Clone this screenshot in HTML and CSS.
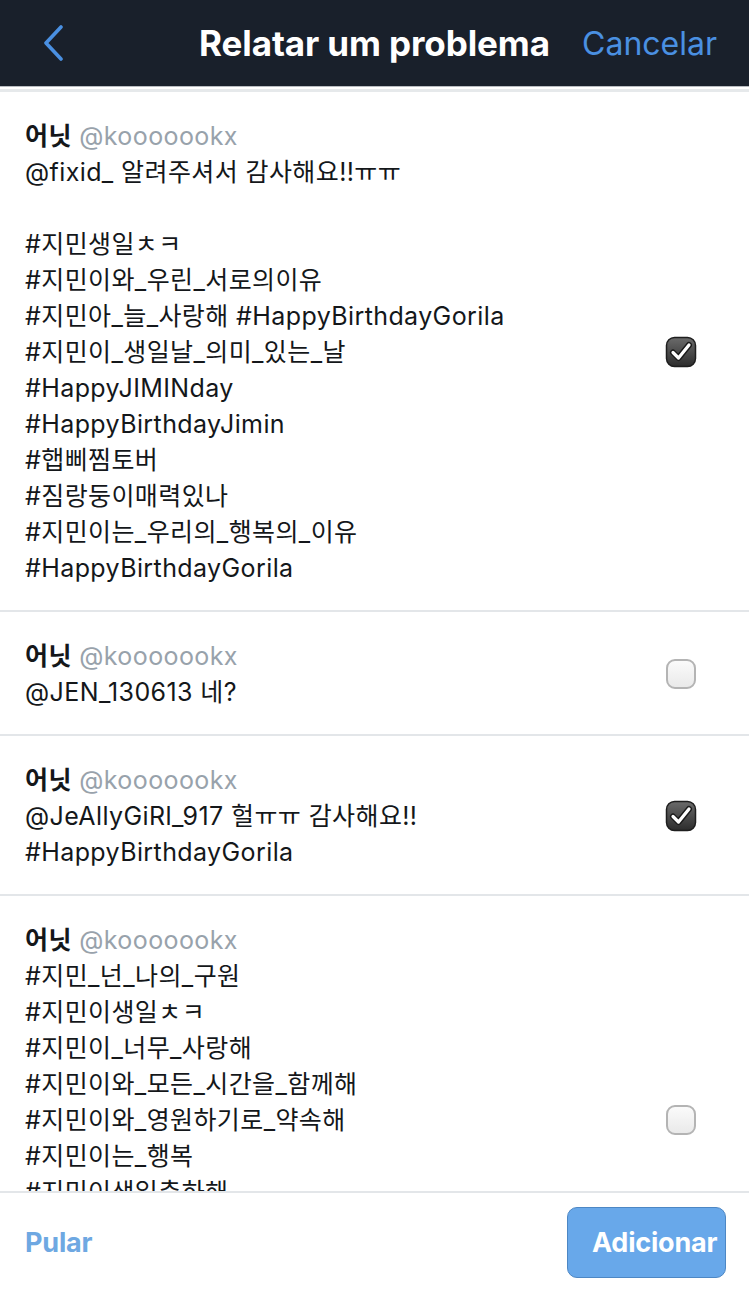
FILE: index.html
```html
<!DOCTYPE html>
<html lang="pt">
<head>
<meta charset="utf-8">
<title>Relatar um problema</title>
<link rel="stylesheet" href="styles.css">
</head>
<body>
<div class="app">
  <header class="topbar">
    <button class="back" aria-label="Voltar">
      <svg width="24" height="36" viewBox="0 0 24 36"><path d="M19 2 L4 18 L19 34" fill="none" stroke="#4a90e2" stroke-width="3.6" stroke-linecap="round" stroke-linejoin="round"/></svg>
    </button>
    <h1 class="title">Relatar um problema</h1>
    <span class="cancel">Cancelar</span>
  </header>
  <div class="list">
    <div class="tweet">
      <div class="content">
        <div class="author"><span class="name">어닛</span> <span class="handle">@kooooookx</span></div>
        <div class="body">@fixid_ 알려주셔서 감사해요!!ㅠㅠ

#지민생일ㅊㅋ
#지민이와_우린_서로의이유
#지민아_늘_사랑해 #HappyBirthdayGorila
#지민이_생일날_의미_있는_날
#HappyJIMINday
#HappyBirthdayJimin
#햅삐찜토버
#짐랑둥이매력있나
#지민이는_우리의_행복의_이유
#HappyBirthdayGorila</div>
      </div>
      <span class="check on"><svg width="32" height="32" viewBox="0 0 32 32"><defs><linearGradient id="g1" x1="0" y1="0" x2="0" y2="1"><stop offset="0" stop-color="#6b6b6b"/><stop offset="1" stop-color="#2c2c2c"/></linearGradient></defs><rect x="1.5" y="1.5" width="29" height="29" rx="8" fill="url(#g1)" stroke="#1e1e1e" stroke-width="1.5"/><path d="M8 16.5 L13.5 22 L24 9" fill="none" stroke="#1a1a1a" stroke-width="6" stroke-linecap="round" stroke-linejoin="round"/><path d="M8 16.5 L13.5 22 L24 9" fill="none" stroke="#fff" stroke-width="3.2" stroke-linecap="round" stroke-linejoin="round"/></svg></span>
    </div>
    <div class="tweet">
      <div class="content">
        <div class="author"><span class="name">어닛</span> <span class="handle">@kooooookx</span></div>
        <div class="body">@JEN_130613 네?</div>
      </div>
      <span class="check"><svg width="32" height="32" viewBox="0 0 32 32"><defs><linearGradient id="g2" x1="0" y1="0" x2="0" y2="1"><stop offset="0" stop-color="#fbfbfb"/><stop offset="1" stop-color="#e9e9e9"/></linearGradient></defs><rect x="2" y="2" width="28" height="28" rx="8" fill="url(#g2)" stroke="#b4b4b4" stroke-width="2"/></svg></span>
    </div>
    <div class="tweet">
      <div class="content">
        <div class="author"><span class="name">어닛</span> <span class="handle">@kooooookx</span></div>
        <div class="body">@JeAllyGiRl_917 헐ㅠㅠ 감사해요!!
#HappyBirthdayGorila</div>
      </div>
      <span class="check on"><svg width="32" height="32" viewBox="0 0 32 32"><defs><linearGradient id="g3" x1="0" y1="0" x2="0" y2="1"><stop offset="0" stop-color="#6b6b6b"/><stop offset="1" stop-color="#2c2c2c"/></linearGradient></defs><rect x="1.5" y="1.5" width="29" height="29" rx="8" fill="url(#g3)" stroke="#1e1e1e" stroke-width="1.5"/><path d="M8 16.5 L13.5 22 L24 9" fill="none" stroke="#1a1a1a" stroke-width="6" stroke-linecap="round" stroke-linejoin="round"/><path d="M8 16.5 L13.5 22 L24 9" fill="none" stroke="#fff" stroke-width="3.2" stroke-linecap="round" stroke-linejoin="round"/></svg></span>
    </div>
    <div class="tweet">
      <div class="content">
        <div class="author"><span class="name">어닛</span> <span class="handle">@kooooookx</span></div>
        <div class="body">#지민_넌_나의_구원
#지민이생일ㅊㅋ
#지민이_너무_사랑해
#지민이와_모든_시간을_함께해
#지민이와_영원하기로_약속해
#지민이는_행복
#지민이생일축하해
#HappyJIMINday
#HappyBirthdayJimin
#HappyBirthdayGorila</div>
      </div>
      <span class="check"><svg width="32" height="32" viewBox="0 0 32 32"><defs><linearGradient id="g4" x1="0" y1="0" x2="0" y2="1"><stop offset="0" stop-color="#fbfbfb"/><stop offset="1" stop-color="#e9e9e9"/></linearGradient></defs><rect x="2" y="2" width="28" height="28" rx="8" fill="url(#g4)" stroke="#b4b4b4" stroke-width="2"/></svg></span>
    </div>
  </div>
  <footer class="bottombar">
    <span class="skip">Pular</span>
    <button class="add">Adicionar</button>
  </footer>
</div>
</body>
</html>
```
FILE: styles.css
```css
* { box-sizing: border-box; }
html, body { margin: 0; padding: 0; background: #fff; }
body {
  font-family: Inter, "Noto Sans CJK KR", sans-serif;
  color: #14171a;
}
.app {
  width: 749px;
  height: 1292px;
  display: flex;
  flex-direction: column;
  overflow: hidden;
}
.topbar {
  flex: none;
  height: 87px;
  background: #19202b;
  border-bottom: 1px solid #b8bcc1;
  display: grid;
  grid-template-columns: 1fr auto 1fr;
  align-items: center;
  padding: 0 32px;
}
.back {
  justify-self: start;
  margin-left: 10px;
  background: none;
  border: 0;
  padding: 0;
  width: 24px;
  height: 36px;
  display: flex;
}
.title {
  margin: 0;
  text-align: center;
  color: #fff;
  font-size: 35px;
  font-weight: 700;
  letter-spacing: -0.1px;
}
.cancel {
  justify-self: end;
  color: #4a90e2;
  font-size: 32px;
  font-weight: 400;
}
.list {
  flex: 1;
  overflow: hidden;
  margin-top: 2px;
  border-top: 3px solid #e6e9eb;
}
.tweet {
  display: flex;
  align-items: center;
  padding: 26px 52px 24px 25px;
  border-bottom: 2px solid #e3e6e9;
}
.content { flex: 1; min-width: 0; }
.author, .body {
  font-size: 25px;
  line-height: 36px;
  letter-spacing: 0.4px;
}
.name { font-weight: 700; }
.handle { color: #98a2ab; }
.body { white-space: pre-line; }
.check {
  flex: none;
  width: 32px;
  height: 32px;
  display: flex;
}
.bottombar {
  flex: none;
  height: 101px;
  border-top: 2px solid #e3e6e9;
  display: flex;
  align-items: center;
  justify-content: space-between;
  padding: 0 23px 0 25px;
  background: #fff;
}
.skip {
  color: #6ea8e2;
  font-size: 27px;
  font-weight: 700;
  letter-spacing: -0.2px;
}
.add {
  width: 159px;
  height: 71px;
  background: #68a8ea;
  border: 1.5px solid #4d87c4;
  border-radius: 10px;
  color: #fff;
  font-family: Inter, sans-serif;
  font-size: 27px;
  font-weight: 700;
  letter-spacing: -0.2px;
  text-align: left;
  padding: 0 0 0 24px;
  white-space: nowrap;
  overflow: hidden;
}
```
